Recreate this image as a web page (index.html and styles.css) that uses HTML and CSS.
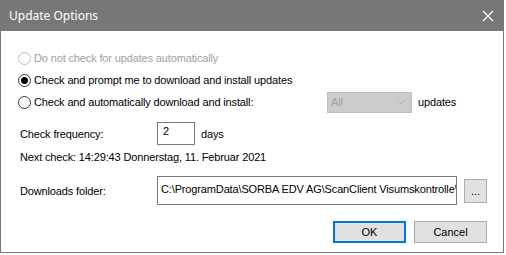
FILE: index.html
```html
<!DOCTYPE html>
<html lang="en">
<head>
    <meta charset="UTF-8">
    <title>Update Options</title>
    <link rel="stylesheet" href="styles.css">
</head>
<body>
    <div class="window">
        <header class="title-bar">
            <span class="title">Update Options</span>
            <svg class="close-icon" width="12" height="12" viewBox="0 0 12 12">
                <path d="M1 1 L11 11 M11 1 L1 11" stroke="#fff" stroke-width="1.2" fill="none"/>
            </svg>
        </header>

        <main class="content">
            <div class="row radio-row disabled">
                <span class="radio"></span>
                <span>Do not check for updates automatically</span>
            </div>
            <div class="row radio-row">
                <span class="radio checked"></span>
                <span>Check and prompt me to download and install updates</span>
            </div>
            <div class="row radio-row">
                <span class="radio"></span>
                <span class="label-auto">Check and automatically download and install:</span>
                <div class="combo">
                    <span>All</span>
                    <svg width="10" height="6" viewBox="0 0 10 6">
                        <path d="M1 1 L5 5 L9 1" stroke="#b8b8b8" stroke-width="1" fill="none"/>
                    </svg>
                </div>
                <span class="suffix">updates</span>
            </div>

            <div class="row freq-row">
                <span class="field-label">Check frequency:</span>
                <div class="textbox small">2</div>
                <span class="suffix">days</span>
            </div>

            <div class="row next-row">
                <span>Next check: 14:29:43 Donnerstag, 11. Februar 2021</span>
            </div>

            <div class="row folder-row">
                <span class="field-label">Downloads folder:</span>
                <div class="textbox path"><span class="path-text">C:\ProgramData\SORBA EDV AG\ScanClient Visumskontrolle\u</span></div>
                <button class="browse-btn">...</button>
            </div>

            <div class="button-bar">
                <button class="btn default">OK</button>
                <button class="btn">Cancel</button>
            </div>
        </main>
    </div>
</body>
</html>
```

FILE: styles.css
```css
* {
    margin: 0;
    padding: 0;
    box-sizing: border-box;
}

body {
    background-color: #fff;
    font-family: "Liberation Sans", Arial, sans-serif;
    font-size: 11px;
    letter-spacing: -0.14px;
    color: #000;
}

.window {
    width: 504px;
    height: 253px;
    border: 1px solid #777;
    border-top: none;
    background-color: #fff;
    display: flex;
    flex-direction: column;
}

/* Title bar */
.title-bar {
    height: 31px;
    background-color: #777;
    color: #fff;
    display: flex;
    align-items: center;
    justify-content: space-between;
    padding: 0 10px 0 9px;
    margin: 0 -1px;
}

.title {
    font-family: "Noto Sans", sans-serif;
    font-size: 12px;
    letter-spacing: 0;
}

/* Content */
.content {
    padding: 16px 0 0 17px;
    flex: 1;
}

.row {
    display: flex;
    align-items: center;
}

.radio-row {
    height: 22px;
}

.radio-row.disabled {
    color: #a0a0a0;
}

.radio {
    width: 13px;
    height: 13px;
    border: 1px solid #333;
    border-radius: 50%;
    margin-right: 3px;
    display: flex;
    align-items: center;
    justify-content: center;
    background-color: #fff;
}

.disabled .radio {
    border-color: #bcbcbc;
}

.radio.checked::after {
    content: "";
    width: 7px;
    height: 7px;
    border-radius: 50%;
    background-color: #000;
}

.label-auto {
    width: 293px;
}

.combo {
    width: 85px;
    height: 21px;
    background-color: #ccc;
    border: 1px solid #bfbfbf;
    color: #a0a0a0;
    display: flex;
    align-items: center;
    justify-content: space-between;
    padding: 0 5px 0 3px;
}

.suffix {
    margin-left: 6px;
}

.field-label {
    width: 139px;
    padding-left: 2px;
}

.freq-row {
    margin-top: 9px;
    height: 23px;
}

.textbox {
    border: 1px solid #7a7a7a;
    background-color: #fff;
    height: 23px;
    padding: 2px 5px;
    white-space: nowrap;
    overflow: hidden;
}

.textbox.small {
    width: 38px;
}

.next-row {
    height: 14px;
    margin-top: 5px;
    padding-left: 2px;
}

.folder-row {
    margin-top: 12px;
    height: 29px;
}

.textbox.path {
    width: 300px;
    height: 29px;
    padding: 6px 3px;
}

.browse-btn {
    width: 23px;
    height: 24px;
    margin-left: 7px;
    border: 1px solid #adadad;
    background-color: #e1e1e1;
    font-family: inherit;
    font-size: 11px;
}

.button-bar {
    display: flex;
    justify-content: flex-end;
    gap: 8px;
    padding-right: 16px;
    margin-top: 16px;
}

.btn {
    width: 73px;
    height: 22px;
    border: 1px solid #adadad;
    background-color: #e1e1e1;
    font-family: inherit;
    font-size: 11px;
}

.btn.default {
    border: 2px solid #0078d7;
}
```
